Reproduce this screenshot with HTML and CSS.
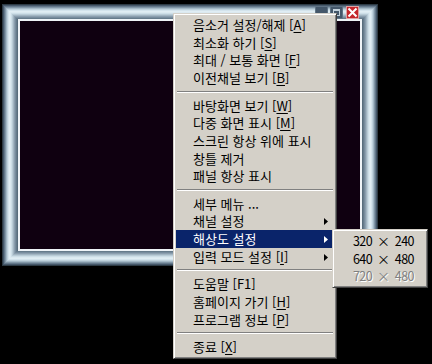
FILE: index.html
```html
<!DOCTYPE html>
<html lang="ko">
<head>
<meta charset="utf-8">
<link rel="stylesheet" href="styles.css">
</head>
<body>
<div class="screen">
  <div class="window">
    <div class="titlebtns">
      <span class="tbtn tbtn-min"></span>
      <span class="tbtn tbtn-max"><span class="maxbox"></span></span>
      <span class="tbtn tbtn-close">
        <svg width="13" height="13" viewBox="0 0 13 13"><path d="M2.5 2.5 L10.5 10.5 M10.5 2.5 L2.5 10.5" stroke="#fff" stroke-width="2" fill="none"/></svg>
      </span>
    </div>
    <div class="view"></div>
  </div>

  <div class="menu main-menu">
    <div class="item">음소거 설정/해제 [<u>A</u>]</div>
    <div class="item">최소화 하기 [<u>S</u>]</div>
    <div class="item">최대 / 보통 화면 [<u>F</u>]</div>
    <div class="item">이전채널 보기 [<u>B</u>]</div>
    <div class="sep"></div>
    <div class="item">바탕화면 보기 [<u>W</u>]</div>
    <div class="item">다중 화면 표시 [<u>M</u>]</div>
    <div class="item">스크린 항상 위에 표시</div>
    <div class="item">창틀 제거</div>
    <div class="item">패널 항상 표시</div>
    <div class="sep"></div>
    <div class="item">세부 메뉴 ...</div>
    <div class="item has-sub">채널 설정<svg class="arrow" width="4" height="7" viewBox="0 0 4 7"><polygon points="0,0 4,3.5 0,7"/></svg></div>
    <div class="item has-sub active">해상도 설정<svg class="arrow" width="4" height="7" viewBox="0 0 4 7"><polygon points="0,0 4,3.5 0,7"/></svg></div>
    <div class="item has-sub">입력 모드 설정 [<u>I</u>]<svg class="arrow" width="4" height="7" viewBox="0 0 4 7"><polygon points="0,0 4,3.5 0,7"/></svg></div>
    <div class="sep"></div>
    <div class="item">도움말 [F1]</div>
    <div class="item">홈페이지 가기 [<u>H</u>]</div>
    <div class="item">프로그램 정보 [<u>P</u>]</div>
    <div class="sep"></div>
    <div class="item">종료 [<u>X</u>]</div>
  </div>

  <div class="menu sub-menu">
    <div class="item">320 <span class="times">×</span> 240</div>
    <div class="item">640 <span class="times">×</span> 480</div>
    <div class="item disabled">720 <span class="times">×</span> 480</div>
  </div>
</div>
</body>
</html>
```

FILE: styles.css
```css
html, body {
  margin: 0;
  padding: 0;
  background: #000;
}

.screen {
  position: relative;
  width: 432px;
  height: 364px;
  overflow: hidden;
  background: #000;
  padding: 4px 0 0 2px;
  box-sizing: border-box;
  font-family: "Noto Sans CJK KR", "Noto Sans", sans-serif;
  font-size: 13px;
}

.window {
  position: relative;
  width: 376px;
  height: 262px;
  box-sizing: border-box;
  padding: 15px 16px;
  background: #556a7a;
  box-shadow:
    inset 0 0 0 1px #2c3a44,
    inset 0 0 0 2px #46586a,
    inset 0 0 0 3px #63788a,
    inset 0 0 0 4px #8196a6,
    inset 0 0 0 5px #a2b7c5,
    inset 0 0 0 6px #bed1dc,
    inset 0 0 0 7px #d3e3ec,
    inset 0 0 0 8px #e0edf3,
    inset 0 0 0 9px #dbe9f0,
    inset 0 0 0 10px #cddee7,
    inset 0 0 0 11px #b9cbd6,
    inset 0 0 0 12px #a2b5c2,
    inset 0 0 0 13px #8b9eae,
    inset 0 0 0 14px #778c9d,
    inset 0 0 0 15px #667b8b,
    inset 0 0 0 16px #586d7d;
}

.view {
  width: 100%;
  height: 100%;
  box-sizing: border-box;
  border: 2px solid #eef3f7;
  background: #0f0010;
}

.titlebtns {
  position: absolute;
  top: 2px;
  right: 19px;
  display: flex;
  gap: 2px;
}

.tbtn {
  display: block;
  width: 13px;
  height: 13px;
  box-sizing: border-box;
}

.tbtn-min {
  background: #44576a;
  border: 1px solid #5f7384;
}

.tbtn-max {
  background: #44576a;
  border: 1px solid #5f7384;
  padding: 2px;
}

.maxbox {
  display: block;
  width: 100%;
  height: 100%;
  box-sizing: border-box;
  border: 1px solid #c3d2dc;
  border-top-width: 2px;
}

.tbtn-close {
  margin-left: 1px;
  background: #c4262b;
  box-shadow: inset 0 0 0 1px #e0a0a0;
}

.tbtn-close svg {
  display: block;
}

.menu {
  position: absolute;
  background: #d4d0c8;
  color: #000;
  box-sizing: border-box;
  border: 1px solid;
  border-color: #d4d0c8 #404040 #404040 #d4d0c8;
  box-shadow: inset 1px 1px #fff, inset -1px -1px #808080;
  padding: 2px;
  display: flex;
  flex-direction: column;
}

.main-menu {
  left: 173px;
  top: 13px;
  width: 164px;
  height: 346px;
}

.sub-menu {
  left: 332px;
  top: 229px;
  width: 96px;
  height: 59px;
}

.item {
  height: 17.67px;
  line-height: 17.67px;
  padding-left: 17px;
  white-space: nowrap;
  display: flex;
  align-items: center;
  position: relative;
}

.sub-menu .item {
  padding-left: 18px;
  font-size: 12.5px;
  letter-spacing: -0.6px;
  white-space: pre;
}

.times {
  font-size: 13px;
  letter-spacing: 0;
  margin: 0 2px;
}

.item u {
  text-decoration-thickness: 1px;
  text-underline-offset: 2px;
}

.item.active {
  background: #0a246a;
  color: #fff;
}

.arrow {
  position: absolute;
  right: 6px;
  top: 6px;
  fill: #000;
}

.active .arrow {
  fill: #fff;
}

.item.disabled {
  color: #808080;
  text-shadow: 1px 1px 0 #fff;
}

.sep {
  height: 10px;
  margin: 0 1px;
  box-sizing: border-box;
  padding-top: 4px;
}

.sep::before {
  content: "";
  display: block;
  height: 1px;
  background: #808080;
  border-bottom: 1px solid #fff;
}
```
